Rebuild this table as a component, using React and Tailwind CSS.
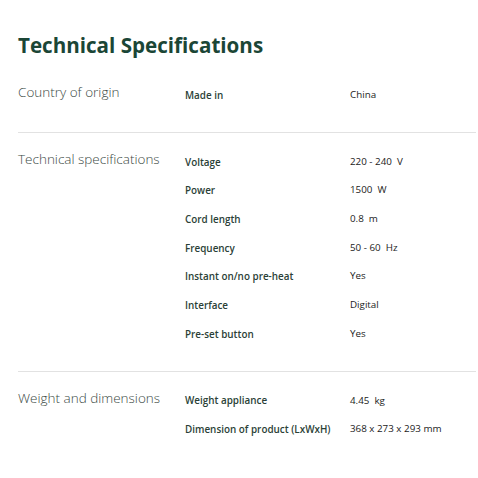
import React from "react";

const sections = [
  {
    title: "Country of origin",
    rows: [["Made in", "China"]],
  },
  {
    title: "Technical specifications",
    rows: [
      ["Voltage", "220 - 240  V"],
      ["Power", "1500  W"],
      ["Cord length", "0.8  m"],
      ["Frequency", "50 - 60  Hz"],
      ["Instant on/no pre-heat", "Yes"],
      ["Interface", "Digital"],
      ["Pre-set button", "Yes"],
    ],
  },
  {
    title: "Weight and dimensions",
    rows: [
      ["Weight appliance", "4.45  kg"],
      ["Dimension of product (LxWxH)", "368 x 273 x 293 mm"],
    ],
  },
];

export default function App() {
  return (
    <div className="w-[478px] h-[478px] bg-white pl-[18px] pr-[2px] font-['Open_Sans',_sans-serif] overflow-hidden">
      <h1 className="pt-[30px] text-[20.6px] leading-[30px] font-bold text-[#1b4636]">
        Technical Specifications
      </h1>

      <div className="mt-[6px]">
        {sections.map((s, i) => (
          <div
            key={s.title}
            className={`flex pt-[15px] pb-[22px] ${i < sections.length - 1 ? "border-b border-[#e2e2e2]" : ""}`}
          >
            <div className="w-[167px] shrink-0 text-[13.5px] leading-[23px] font-light text-[#3b4a44]">
              {s.title}
            </div>
            <div className="flex flex-col">
              {s.rows.map(([k, v]) => (
                <div key={k} className="flex h-[28.7px] items-center">
                  <span className="w-[165px] shrink-0 text-[9.9px] font-semibold text-[#2b3f37]">{k}</span>
                  <span className="text-[9.8px] text-[#222] whitespace-pre">{v}</span>
                </div>
              ))}
            </div>
          </div>
        ))}
      </div>
    </div>
  );
}
